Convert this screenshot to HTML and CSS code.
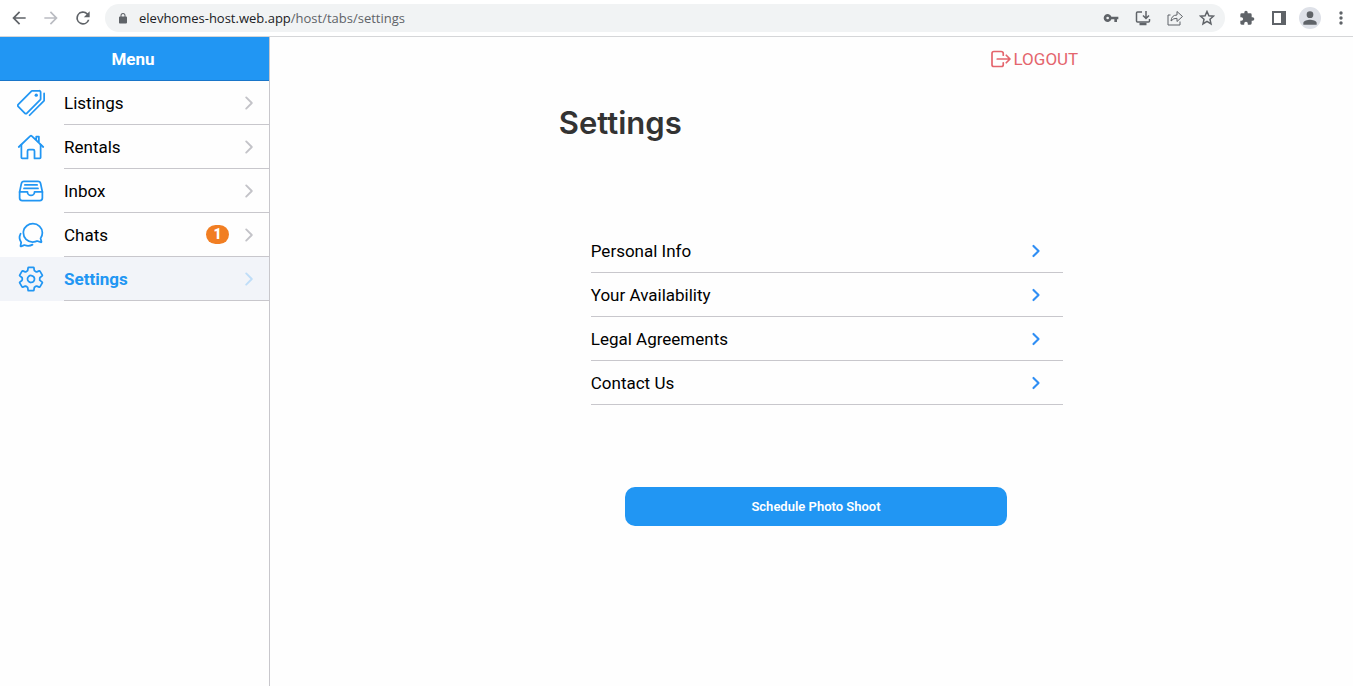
FILE: index.html
```
<!DOCTYPE html>
<html lang="en">
<head>
<meta charset="utf-8">
<title>Settings</title>
<link rel="stylesheet" href="styles.css">
</head>
<body>
<svg class="defs" aria-hidden="true">
  <symbol id="chevron" viewBox="0 0 512 512"><path d="M184 112l144 144-144 144"/></symbol>
</svg>
<header class="browser">
  <button class="tool" aria-label="Back"><svg class="fill" viewBox="0 0 24 24"><path d="M20 11H7.8l5.6-5.6L12 4l-8 8 8 8 1.4-1.4L7.8 13H20z"/></svg></button>
  <button class="tool tool-off" aria-label="Forward"><svg class="fill" viewBox="0 0 24 24"><path d="M12 4l-1.4 1.4 5.6 5.6H4v2h12.2l-5.6 5.6L12 20l8-8z"/></svg></button>
  <button class="tool" aria-label="Reload"><svg class="fill" viewBox="0 0 24 24"><path d="M17.65 6.35A8 8 0 1 0 19.73 14h-2.08A6 6 0 1 1 12 6c1.66 0 3.14.69 4.22 1.78L13 11h7V4z"/></svg></button>
  <div class="address">
    <svg class="lock fill" viewBox="0 0 24 24"><path d="M18 8h-1V6A5 5 0 0 0 7 6v2H6a2 2 0 0 0-2 2v10c0 1.1.9 2 2 2h12a2 2 0 0 0 2-2V10a2 2 0 0 0-2-2zM9 6a3 3 0 0 1 6 0v2H9z"/></svg>
    <span class="url"><span class="host">elevhomes-host.web.app</span>/host/tabs/settings</span>
    <button class="mini" aria-label="Passwords"><svg class="fill" viewBox="0 0 24 24"><path fill-rule="evenodd" d="M12.65 10A6 6 0 1 0 12.65 14H17v4h4v-4h2v-4zM7 14a2 2 0 1 1 0-4 2 2 0 0 1 0 4z"/></svg></button>
    <button class="mini" aria-label="Install app"><svg class="line" viewBox="0 0 16 16"><path d="M7 2H2.500Q1.500 2 1.500 3v8q0 1 1 1h11q1 0 1-1V9"/><path d="M11 1v7M8 5.500l3 3 3-3"/><path d="M4.500 14h7" stroke-width="2.500"/></svg></button>
    <button class="mini" aria-label="Share"><svg class="share line" viewBox="0 0 16 16"><path d="M3.500 5H1v10h12v-3.500"/><path d="M4 11Q4.500 5 10 5V1.500L15.500 6.500 10 11.500V8.300Q6.500 8 4 11z"/></svg></button>
    <button class="mini" aria-label="Bookmark"><svg class="line star" viewBox="0 0 16 16"><path d="M8 1.500l1.900 4.300 4.600.4L11 9.300l1 4.600-4-2.500-4 2.500 1-4.600-3.500-3.100 4.600-.4z"/></svg></button>
  </div>
  <button class="mini" aria-label="Extensions"><svg class="fill" viewBox="0 0 24 24"><path d="M20.500 11H19V7a2 2 0 0 0-2-2h-4V3.500a2.500 2.500 0 0 0-5 0V5H4a2 2 0 0 0-2 2v3.800h1.500a2.700 2.700 0 0 1 0 5.400H2V20c0 1.100.9 2 2 2h3.800v-1.500a2.700 2.700 0 0 1 5.400 0V22H17a2 2 0 0 0 2-2v-4h1.500a2.500 2.500 0 0 0 0-5z"/></svg></button>
  <button class="mini" aria-label="Side panel"><svg class="fill" viewBox="0 0 16 16"><path fill-rule="evenodd" d="M1 1h14v14H1zM3 3v10h7V3z"/></svg></button>
  <button class="avatar" aria-label="Profile"><svg class="fill" viewBox="0 0 24 24"><circle cx="12" cy="8" r="4"/><path d="M4 20v-2c0-2.700 5.300-4 8-4s8 1.300 8 4v2z"/></svg></button>
  <button class="mini more" aria-label="More"><svg class="fill" viewBox="0 0 16 16"><circle cx="8" cy="3" r="1.700"/><circle cx="8" cy="8" r="1.700"/><circle cx="8" cy="13" r="1.700"/></svg></button>
</header>
<div class="app">
  <aside class="sidebar">
    <h2 class="menu-title">Menu</h2>
    <nav>
      <a class="nav-item" href="#listings">
        <svg class="nav-icon" viewBox="0 0 512 512"><path d="M403.290 32H280.360a14.460 14.460 0 0 0-10.200 4.200L24.400 281.900a28.850 28.850 0 0 0 0 40.700l117 117a28.860 28.860 0 0 0 40.710 0L427.800 194a14.460 14.460 0 0 0 4.200-10.200V60.800A28.660 28.660 0 0 0 403.290 32z"/><circle class="dot" cx="352" cy="112" r="30"/><path d="M230 480l262-262a13.810 13.810 0 0 0 4-10V80"/></svg>
        <span class="nav-row"><span class="nav-label">Listings</span><svg class="chevron"><use href="#chevron"/></svg></span>
      </a>
      <a class="nav-item" href="#rentals">
        <svg class="nav-icon" viewBox="0 0 512 512"><path d="M80 212v236a16 16 0 0 0 16 16h96V328a24 24 0 0 1 24-24h80a24 24 0 0 1 24 24v136h96a16 16 0 0 0 16-16V212"/><path d="M480 256L266.890 52c-5-5.280-16.690-5.340-21.780 0L32 256M400 179V64h-48v69"/></svg>
        <span class="nav-row"><span class="nav-label">Rentals</span><svg class="chevron"><use href="#chevron"/></svg></span>
      </a>
      <a class="nav-item" href="#inbox">
        <svg class="nav-icon" viewBox="0 0 512 512"><path d="M384 80H128c-26 0-43 14-48 40L48 272v112a48.140 48.140 0 0 0 48 48h320a48.140 48.140 0 0 0 48-48V272l-32-152c-5-27-23-40-48-40z"/><path d="M48 272h144M320 272h144M192 272a64 64 0 0 0 128 0M144 144h224M128 208h256"/></svg>
        <span class="nav-row"><span class="nav-label">Inbox</span><svg class="chevron"><use href="#chevron"/></svg></span>
      </a>
      <a class="nav-item" href="#chats">
        <svg class="nav-icon" viewBox="0 0 512 512"><path d="M431 320.600c-1-3.600 1.200-8.600 3.300-12.200a33.680 33.680 0 0 1 2.100-3.100A162 162 0 0 0 464 215c.3-92.200-77.500-167-173.700-167-83.900 0-153.900 57.100-170.300 132.900a160.700 160.700 0 0 0-3.700 34.200c0 92.300 74.800 169.100 171 169.100 15.300 0 35.900-4.600 47.200-7.700s22.500-7.200 25.400-8.300a26.440 26.440 0 0 1 9.300-1.700 26 26 0 0 1 10.100 2l56.700 20.100a13.520 13.520 0 0 0 3.900 1 8 8 0 0 0 8-8 12.850 12.850 0 0 0-.5-2.700z"/><path d="M66.460 232a146.230 146.230 0 0 0 6.390 152.670c2.310 3.490 3.610 6.190 3.210 8s-11.930 61.870-11.930 61.870a8 8 0 0 0 2.710 7.680A8.170 8.170 0 0 0 72 464a7.260 7.260 0 0 0 2.910-.6l56.210-22a15.700 15.700 0 0 1 12 .2c18.940 7.380 39.880 12 60.830 12A159.210 159.210 0 0 0 284 432.110"/></svg>
        <span class="nav-row"><span class="nav-label">Chats</span><span class="badge">1</span><svg class="chevron"><use href="#chevron"/></svg></span>
      </a>
      <a class="nav-item nav-active" href="#settings" aria-current="page">
        <svg class="nav-icon" viewBox="0 0 512 512"><path d="M262.290 192.310a64 64 0 1 0 57.400 57.400 64.130 64.130 0 0 0-57.400-57.400zM416.390 256a154.340 154.340 0 0 1-1.530 20.790l45.210 35.460a10.810 10.810 0 0 1 2.450 13.750l-42.770 74a10.810 10.810 0 0 1-13.140 4.590l-44.900-18.080a16.110 16.110 0 0 0-15.170 1.750A164.480 164.480 0 0 1 325 400.800a15.940 15.940 0 0 0-8.820 12.140l-6.730 47.890a11.080 11.080 0 0 1-10.680 9.170h-85.540a11.110 11.110 0 0 1-10.690-8.870l-6.720-47.820a16.070 16.070 0 0 0-9-12.220 155.300 155.300 0 0 1-21.460-12.570 16 16 0 0 0-15.110-1.710l-44.890 18.070a10.810 10.810 0 0 1-13.140-4.580l-42.770-74a10.800 10.800 0 0 1 2.450-13.750l38.210-30a16.050 16.050 0 0 0 6-14.080c-.36-4.170-.58-8.330-.58-12.500s.21-8.270.58-12.350a16 16 0 0 0-6.070-13.940l-38.190-30A10.810 10.810 0 0 1 49.480 186l42.770-74a10.810 10.810 0 0 1 13.140-4.590l44.900 18.080a16.110 16.110 0 0 0 15.170-1.750A164.480 164.480 0 0 1 187 111.200a15.940 15.940 0 0 0 8.820-12.140l6.730-47.890A11.080 11.080 0 0 1 213.230 42h85.540a11.110 11.110 0 0 1 10.690 8.870l6.720 47.820a16.070 16.070 0 0 0 9 12.220 155.300 155.300 0 0 1 21.460 12.570 16 16 0 0 0 15.110 1.710l44.890-18.070a10.810 10.810 0 0 1 13.140 4.580l42.770 74a10.800 10.800 0 0 1-2.450 13.750l-38.210 30a16.050 16.050 0 0 0-6.050 14.080c.33 4.140.55 8.300.55 12.470z"/></svg>
        <span class="nav-row"><span class="nav-label">Settings</span><svg class="chevron"><use href="#chevron"/></svg></span>
      </a>
    </nav>
  </aside>
  <main class="main">
    <div class="content">
      <button class="logout"><svg viewBox="0 0 512 512"><path d="M304 336v40a40 40 0 0 1-40 40H104a40 40 0 0 1-40-40V136a40 40 0 0 1 40-40h152c22.090 0 48 17.910 48 40v40M368 336l80-80-80-80M176 256h256"/></svg>LOGOUT</button>
      <h1 class="title">Settings</h1>
      <nav class="list">
        <a class="list-item" href="#personal">Personal Info<svg class="chevron"><use href="#chevron"/></svg></a>
        <a class="list-item" href="#availability">Your Availability<svg class="chevron"><use href="#chevron"/></svg></a>
        <a class="list-item" href="#legal">Legal Agreements<svg class="chevron"><use href="#chevron"/></svg></a>
        <a class="list-item" href="#contact">Contact Us<svg class="chevron"><use href="#chevron"/></svg></a>
      </nav>
      <button class="primary">Schedule Photo Shoot</button>
    </div>
  </main>
</div>
</body>
</html>
```
FILE: styles.css
```
* { box-sizing: border-box; }
body {
  margin: 0;
  min-height: 100vh;
  display: flex;
  flex-direction: column;
  background: #fefefe;
  color: #000;
  font: 17px/24px Roboto, sans-serif;
}
button { border: 0; padding: 0; background: none; color: inherit; font: inherit; cursor: pointer; }
a { color: inherit; text-decoration: none; }
h1, h2 { margin: 0; }
svg { display: block; flex: none; fill: none; stroke: currentColor; stroke-linecap: round; stroke-linejoin: round; }
.fill { fill: currentColor; stroke: none; }
.line { stroke-width: 1.5; stroke-linecap: butt; stroke-linejoin: miter; }
.defs { display: none; }

.browser {
  display: flex;
  align-items: center;
  gap: 12px;
  height: 37px;
  padding: 0 4px 0 9px;
  border-bottom: 1px solid #d5d6d8;
  background: #fff;
  color: #5f6368;
}
.tool svg { width: 20px; height: 20px; }
.tool-off { color: #babcc2; }
.address {
  flex: 1;
  display: flex;
  align-items: center;
  gap: 16px;
  height: 28px;
  padding: 0 10px 0 12px;
  border-radius: 14px;
  background: #f1f3f4;
}
.lock { width: 12px; height: 13px; }
.url { flex: 1; margin-left: -6px; font: 13px/20px "Open Sans", sans-serif; }
.host { color: #202124; }
.mini svg { width: 16px; height: 16px; }
.mini .share { stroke-width: 1; }
.browser > .mini { margin-left: 2px; }
.browser > .more { margin-left: 0; }
.avatar { padding: 1px; border-radius: 50%; background: #dee1e8; }
.avatar svg { width: 20px; height: 20px; }
.browser > .mini + .mini { margin-left: 4px; }

.app { flex: 1; display: flex; }
.sidebar { width: 270px; border-right: 1px solid #c8c7cc; }
.menu-title {
  padding: 10px 3px 9px 0;
  height: 44px;
  border-bottom: 1px solid #1976c9;
  background: #2196f3;
  color: #fff;
  font-size: 17px;
  line-height: 24px;
  font-weight: 700;
  text-align: center;
}
.nav-item { display: flex; align-items: center; gap: 19px; padding-left: 17px; }
.nav-icon { width: 28px; height: 28px; color: #2196f3; stroke-width: 32; }
.dot { fill: currentColor; stroke: none; }
.nav-row {
  flex: 1;
  display: flex;
  align-items: center;
  height: 44px;
  padding-right: 10px;
  border-bottom: 1px solid #c8c7cc;
}
.nav-label { flex: 1; }
.chevron { width: 20px; height: 20px; color: #c3c3c8; stroke-width: 48; }
.nav-active { background: #f2f4f9; }
.nav-active .nav-label { color: #2196f3; font-weight: 700; }
.nav-active .chevron { color: #bfddf8; }
.badge {
  min-width: 23px;
  margin-right: 10px;
  border-radius: 10px;
  background: #f17e22;
  color: #fff;
  font-size: 14px;
  line-height: 19px;
  font-weight: 900;
  text-align: center;
}

.main { flex: 1; }
.content { display: flex; flex-direction: column; width: 50%; margin: 0 auto; padding: 10px 4px 0 18px; }
.logout { display: flex; align-items: center; align-self: flex-end; color: #e4656d; }
.logout svg { width: 24px; height: 24px; stroke-width: 36; }
.title { margin-top: 28px; color: #333; font: 600 31px/48px Inter, sans-serif; }
.list { margin: 82px 15px 0 32px; }
.list-item {
  display: flex;
  align-items: center;
  justify-content: space-between;
  height: 44px;
  padding-right: 18px;
  border-bottom: 1px solid #c8c7cc;
}
.list .chevron { width: 18px; height: 18px; color: #2f8ef4; stroke-width: 60; }
.primary {
  margin: 82px 71px 0 66px;
  padding: 9px;
  border-radius: 10px;
  background: #2196f3;
  color: #fff;
  font-size: 13px;
  line-height: 21px;
  font-weight: 600;
}
```
